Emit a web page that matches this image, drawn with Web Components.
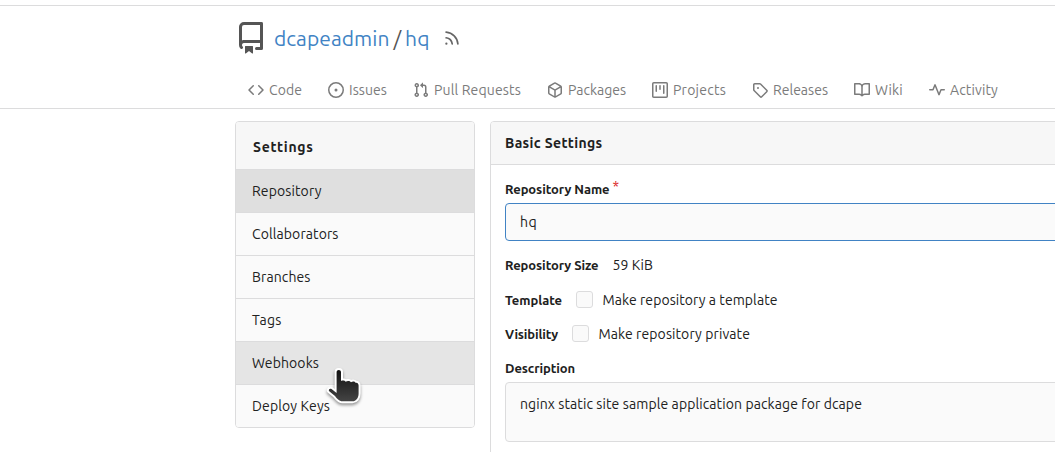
<!DOCTYPE html>
<html lang="en">
<head>
<meta charset="utf-8">
<title>dcapeadmin/hq - Settings</title>
<style>
html,body{margin:0;height:100%;overflow:hidden;background:#fff}
body{font-family:Ubuntu,"Noto Sans","Open Sans",sans-serif;font-size:14px;color:#212121}
</style>
</head>
<body>
<repo-page></repo-page>
<script>
const define = (name, html, setup) => {
  const t = document.createElement('template');
  t.innerHTML = html;
  customElements.define(name, class extends HTMLElement {
    connectedCallback() {
      if (this.shadowRoot) return;
      this.attachShadow({mode: 'open'}).append(t.content.cloneNode(true));
      if (setup) setup(this, this.shadowRoot);
    }
  });
};

// Inline text tracked to occupy a given advance width.
define('fit-text', `<style>:host{display:inline-block;white-space:nowrap;flex:none}span{display:inline-block}</style><span><slot></slot></span>`, (el, root) => {
  const w = +el.getAttribute('w'), s = root.querySelector('span');
  el.style.width = w + 'px';
  s.style.letterSpacing = (w - s.getBoundingClientRect().width) / el.textContent.length + 'px';
});

const ICONS = {
  code: 'M4.72 3.22a.75.75 0 011.06 1.06L2.06 8l3.72 3.72a.75.75 0 11-1.06 1.06L.47 8.53a.75.75 0 010-1.06l4.25-4.25zm6.56 0a.75.75 0 10-1.06 1.06L13.94 8l-3.72 3.72a.75.75 0 101.06 1.06l4.25-4.25a.75.75 0 000-1.06l-4.25-4.25z',
  issue: 'M8 9.5a1.5 1.5 0 100-3 1.5 1.5 0 000 3zM8 0a8 8 0 100 16A8 8 0 008 0zM1.5 8a6.5 6.5 0 1113 0 6.5 6.5 0 01-13 0z',
  pull: 'M7.177 3.073L9.573.677A.25.25 0 0110 .854v4.792a.25.25 0 01-.427.177L7.177 3.427a.25.25 0 010-.354zM3.75 2.5a.75.75 0 100 1.5.75.75 0 000-1.5zm-2.25.75a2.25 2.25 0 113 2.122v5.256a2.251 2.251 0 11-1.5 0V5.372A2.25 2.25 0 011.5 3.25zM11 2.5h-1V4h1a1 1 0 011 1v5.628a2.251 2.251 0 101.5 0V5A2.5 2.5 0 0011 2.5zm1 10.25a.75.75 0 111.5 0 .75.75 0 01-1.5 0zM3.75 12a.75.75 0 100 1.5.75.75 0 000-1.5z',
  package: 'M8.878.392a1.75 1.75 0 00-1.756 0l-5.25 3.045A1.75 1.75 0 001 4.951v6.098c0 .624.332 1.2.872 1.514l5.25 3.045a1.75 1.75 0 001.756 0l5.25-3.045c.54-.313.872-.89.872-1.514V4.951c0-.624-.332-1.2-.872-1.514L8.878.392zM7.875 1.69a.25.25 0 01.25 0l4.63 2.685L8 7.133 3.245 4.375l4.63-2.685zM2.5 5.677v5.372c0 .09.047.171.125.216l4.625 2.683V8.432L2.5 5.677zm6.25 8.271l4.625-2.683a.25.25 0 00.125-.216V5.677L8.75 8.432v5.516z',
  project: 'M1.75 0A1.75 1.75 0 000 1.75v12.5C0 15.216.784 16 1.75 16h12.5A1.75 1.75 0 0016 14.25V1.75A1.75 1.75 0 0014.25 0H1.75zM1.5 1.75a.25.25 0 01.25-.25h12.5a.25.25 0 01.25.25v12.5a.25.25 0 01-.25.25H1.75a.25.25 0 01-.25-.25V1.75zM11.75 3a.75.75 0 00-.75.75v7.5a.75.75 0 001.5 0v-7.5a.75.75 0 00-.75-.75zm-8.25.75a.75.75 0 011.5 0v5.5a.75.75 0 01-1.5 0v-5.5zM8 3a.75.75 0 00-.75.75v3.5a.75.75 0 001.5 0v-3.5A.75.75 0 008 3z',
  tag: 'M2.5 7.775V2.75a.25.25 0 01.25-.25h5.025a.25.25 0 01.177.073l6.25 6.25a.25.25 0 010 .354l-5.025 5.025a.25.25 0 01-.354 0l-6.25-6.25a.25.25 0 01-.073-.177zm-1.5 0V2.75C1 1.784 1.784 1 2.75 1h5.025c.464 0 .91.184 1.238.513l6.25 6.25a1.75 1.75 0 010 2.474l-5.026 5.026a1.75 1.75 0 01-2.474 0l-6.25-6.25A1.75 1.75 0 011 7.775zM6 5a1 1 0 100 2 1 1 0 000-2z',
  book: 'M0 1.75A.75.75 0 01.75 1h4.253c1.227 0 2.317.59 3 1.501A3.744 3.744 0 0111.006 1h4.245a.75.75 0 01.75.75v10.5a.75.75 0 01-.75.75h-4.507a2.25 2.25 0 00-1.591.659l-.622.621a.75.75 0 01-1.06 0l-.622-.621A2.25 2.25 0 005.258 13H.75a.75.75 0 01-.75-.75V1.75zm8.755 3a2.25 2.25 0 012.25-2.25H14.5v9h-3.757c-.71 0-1.4.201-1.992.572l.004-7.322zm-1.504 7.324l.004-5.073-.002-2.253A2.25 2.25 0 005.003 2.5H1.5v9h3.757a3.75 3.75 0 011.994.574z',
  pulse: 'M6 2a.75.75 0 01.696.471L10 10.731l1.304-3.26A.75.75 0 0112 7h3.25a.75.75 0 010 1.5h-2.742l-1.812 4.528a.75.75 0 01-1.392 0L6 4.77 4.696 8.03A.75.75 0 014 8.5H.75a.75.75 0 010-1.5h2.742l1.812-4.529A.75.75 0 016 2z',
  repo: 'M2 2.5A2.5 2.5 0 014.5 0h8.75a.75.75 0 01.75.75v12.5a.75.75 0 01-.75.75h-2.5a.75.75 0 110-1.5h1.75v-2h-8a1 1 0 00-.714 1.7.75.75 0 01-1.072 1.05A2.495 2.495 0 012 11.5v-9zm10.5-1V9h-8c-.356 0-.694.074-1 .208V2.5a1 1 0 011-1h8zM5 12.25v3.25a.25.25 0 00.4.2l1.45-1.087a.25.25 0 01.3 0L8.6 15.7a.25.25 0 00.4-.2v-3.25a.25.25 0 00-.25-.25h-3.5a.25.25 0 00-.25.25z',
  rss: 'M2.002 2.725a.75.75 0 01.797-.699C8.79 2.42 13.58 7.21 13.974 13.201a.75.75 0 11-1.497.098 10.502 10.502 0 00-9.776-9.776.75.75 0 01-.7-.798zM2 13a1 1 0 112 0 1 1 0 01-2 0zm.84-5.95a.75.75 0 00-.179 1.489c2.509.3 4.5 2.291 4.8 4.8a.75.75 0 101.49-.178A7.003 7.003 0 002.838 7.05z'
};
define('oct-icon', `<style>:host{display:block;flex:none}svg{display:block;fill:currentColor}</style><svg viewBox="0 0 16 16"><path fill-rule="evenodd"/></svg>`, (el, root) => {
  const s = root.querySelector('svg'), n = el.getAttribute('size') || 16;
  s.setAttribute('width', n); s.setAttribute('height', n);
  root.querySelector('path').setAttribute('d', ICONS[el.getAttribute('name')]);
});

define('repo-title', `<style>
:host{display:flex;height:64px;align-items:center;padding-left:235px;color:#555;font-size:21px}
.t{display:flex;margin-left:7px;line-height:30px}a{color:#4183c4}
.slash{margin:0 3px 0 4px}
oct-icon.rss{margin-left:12.5px;color:#666}
</style>
<oct-icon name="repo" size="32"></oct-icon>
<div class="t"><a><fit-text w="115.5">dcapeadmin</fit-text></a><fit-text class="slash" w="8.5">/</fit-text><a><fit-text w="25">hq</fit-text></a></div>
<oct-icon class="rss" name="rss" size="18"></oct-icon>`);

define('repo-tab', `<style>:host{display:flex;gap:5px;align-items:center;line-height:20px;color:#7b7b7b}</style><oct-icon></oct-icon><fit-text></fit-text>`, (el, root) => {
  const icon = document.createElement('oct-icon'), text = document.createElement('fit-text');
  icon.setAttribute('name', el.getAttribute('icon'));
  text.setAttribute('w', el.getAttribute('w'));
  text.textContent = el.getAttribute('label');
  root.querySelector('oct-icon').replaceWith(icon);
  root.querySelector('fit-text').replaceWith(text);
});
define('repo-tabs', `<style>:host{display:flex;gap:26px;box-sizing:border-box;height:39px;align-items:center;padding:2px 0 0 248px;border-bottom:1px solid #dcdcdd}</style>
<repo-tab icon="code" w="33" label="Code"></repo-tab><repo-tab icon="issue" w="38" label="Issues"></repo-tab><repo-tab icon="pull" w="87" label="Pull Requests"></repo-tab><repo-tab icon="package" w="58" label="Packages"></repo-tab><repo-tab icon="project" w="53" label="Projects"></repo-tab><repo-tab icon="tag" w="55" label="Releases"></repo-tab><repo-tab icon="book" w="28" label="Wiki"></repo-tab><repo-tab icon="pulse" w="48" label="Activity"></repo-tab>`);

define('menu-item', `<style>
:host{display:flex;align-items:center;box-sizing:border-box;height:43px;padding-left:16px;border-top:1px solid #dcdcdd;background:#fafafa}
:host([active]){background:#dfdfdf}:host([hover]){background:#e5e5e5}</style><slot></slot>`);
define('settings-menu', `<style>
:host{display:block;box-sizing:border-box;width:240px;height:307px;flex:none;border:1px solid #dcdcdd;border-radius:4px;overflow:hidden}
header{display:flex;align-items:center;height:47px;box-sizing:border-box;padding:3px 0 0 17px;background:#f7f7f7;font-weight:600}
</style>
<header><fit-text w="60.5">Settings</fit-text></header>
<menu-item active><fit-text w="69.5">Repository</fit-text></menu-item>
<menu-item><fit-text w="86.5">Collaborators</fit-text></menu-item>
<menu-item><fit-text w="58.5">Branches</fit-text></menu-item>
<menu-item><fit-text w="29.5">Tags</fit-text></menu-item>
<menu-item hover><fit-text w="67">Webhooks</fit-text></menu-item>
<menu-item><fit-text w="78">Deploy Keys</fit-text></menu-item>`);

define('field-row', `<style>:host{display:flex;align-items:center;box-sizing:border-box;height:34px}</style><slot></slot>`);
define('check-box', `<style>:host{display:block;box-sizing:border-box;width:17px;height:17px;border:1px solid #dcdcdd;border-radius:3px;background:#fafafa;flex:none}</style>`);
define('text-field', `<style>
:host{display:flex;box-sizing:border-box;height:38px;padding:0 14px;align-items:center;border:1px solid #dcdcdd;border-radius:4px;background:#fafafa}
:host([focused]){border-color:#4183c4}
:host([multiline]){height:60px;align-items:flex-start;padding-top:11px;line-height:20px}</style><slot></slot>`);
define('settings-form', `<style>
:host{display:block;box-sizing:border-box;width:630px;height:400px;flex:none;border:1px solid #dcdcdd;border-radius:4px;overflow:hidden}
header{box-sizing:border-box;height:43px;display:flex;align-items:center;padding-left:14px;border-bottom:1px solid #dcdcdd;background:#f7f7f7;font-weight:600}
form{padding:0 14px}
.l{font-weight:600;font-size:13px}
.name{height:38px;padding-top:9px}
.star{color:#db2828;margin:-5px 0 0 3px;font-size:14px;line-height:16px}
.size{height:41px;padding-top:7px}
.opt fit-text{margin-top:2px}
.gap{margin-left:14px}.text{margin-left:9.5px}
.desc{height:32px;padding-top:4px}
</style>
<header><fit-text w="97.5">Basic Settings</fit-text></header>
<form>
<field-row class="name"><fit-text class="l" w="104.5">Repository Name</fit-text><span class="star">*</span></field-row>
<text-field focused><fit-text w="17">hq</fit-text></text-field>
<field-row class="size"><fit-text class="l" w="93.5">Repository Size</fit-text><fit-text class="gap" w="40.5">59 KiB</fit-text></field-row>
<field-row class="opt"><fit-text class="l" w="57">Template</fit-text><check-box class="gap"></check-box><fit-text class="text" w="175">Make repository a template</fit-text></field-row>
<field-row class="opt"><fit-text class="l" w="53">Visibility</fit-text><check-box class="gap"></check-box><fit-text class="text" w="151.5">Make repository private</fit-text></field-row>
<field-row class="desc"><fit-text class="l" w="70">Description</fit-text></field-row>
<text-field multiline><fit-text w="342">nginx static site sample application package for dcape</fit-text></text-field>
</form>`);

// Hand pointer resting over the hovered menu entry.
define('hand-pointer', `<style>:host{position:absolute;left:323px;top:363px;pointer-events:none}svg{display:block;filter:drop-shadow(0 2px 1.5px rgba(0,0,0,.4))}</style>
<svg width="44" height="48" viewBox="0 0 44 48"><defs><linearGradient id="g" x1="0" y1="0" x2="0" y2="1"><stop stop-color="#111"/><stop offset="1" stop-color="#444"/></linearGradient></defs>
<path d="M13.6 9C13.6 6.3 18 6.3 18 9V18C19.5 17.2 21.9 17.4 22.7 18.8C24.3 17.4 27 17.8 28 19.2C30 18 32 18.6 32.5 19.8C34.5 19.4 35.6 20.8 35.6 22.5V30.5C35.6 35 33 38.3 29.5 38.3H19.5C16 38.3 14 35.5 12 33L6.2 28.3C5 26.8 6.8 25 8.5 26L13.6 30Z" fill="url(#g)" stroke="#fff" stroke-width="4" stroke-linejoin="round" paint-order="stroke"/></svg>`);

define('repo-page', `<style>
:host{display:block;position:relative;width:1055px;height:452px;overflow:hidden;box-sizing:border-box;padding-top:5px}
.head{border-top:1px solid #dcdcdd}
main{display:flex;gap:15px;padding:12px 0 0 235px}
</style>
<div class="head"><repo-title></repo-title><repo-tabs></repo-tabs></div>
<main><settings-menu></settings-menu><settings-form></settings-form></main>
<hand-pointer></hand-pointer>`);
</script>
</body>
</html>
